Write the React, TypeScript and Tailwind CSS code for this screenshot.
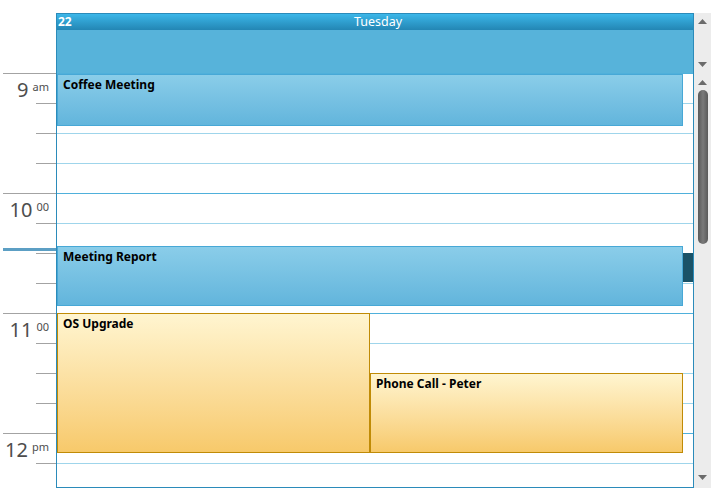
import React from 'react'

const hours = [
  { n: '9', s: 'am' },
  { n: '10', s: '00' },
  { n: '11', s: '00' },
  { n: '12', s: 'pm' },
]

function Arrow({ up }: { up?: boolean }) {
  return (
    <svg width="9" height="5" viewBox="0 0 9 5" className="block">
      {up ? <polygon points="0,5 9,5 4.5,0" fill="#6b6b6b" /> : <polygon points="0,0 9,0 4.5,5" fill="#6b6b6b" />}
    </svg>
  )
}

function CalEvent({
  title,
  kind,
  className,
}: {
  title: string
  kind: 'blue' | 'gold'
  className: string
}) {
  const look =
    kind === 'blue'
      ? 'bg-gradient-to-b from-[#8acde9] to-[#62b5dc] border-[#47a8d6]'
      : 'bg-gradient-to-b from-[#fff5d0] to-[#f7c96a] border-[#c08b06]'
  return (
    <div className={`absolute border px-[5px] pt-[3px] text-[12px] font-bold text-black leading-[14px] ${look} ${className}`}>
      {title}
    </div>
  )
}

export default function App() {
  return (
    <div className="w-[715px] h-[500px] bg-white pt-[13px] font-['Noto_Sans',sans-serif] select-none">
      {/* day header + all day area */}
      <div className="flex h-[60px]">
        <div className="w-[56px] shrink-0" />
        <div className="w-[638px] shrink-0 border-x border-t border-[#2b8bba] flex flex-col">
          <div className="h-[16px] bg-gradient-to-b from-[#3cb7e9] to-[#2386b4] relative flex items-center">
            <span className="absolute left-[1px] top-[1px] text-[12px] font-bold text-white leading-[14px]">22</span>
            <span className="w-full text-center pl-[6px] text-[12.5px] text-white leading-[14px]">Tuesday</span>
          </div>
          <div className="flex-1 bg-[#57b3da]" />
        </div>
        <div className="w-[17px] shrink-0 bg-[#ececec] flex flex-col items-center justify-between pt-[6px] pb-[6px]">
          <Arrow up />
          <Arrow />
        </div>
      </div>

      {/* time area */}
      <div className="flex h-[415px]">
        {/* ruler */}
        <div className="w-[56px] shrink-0 relative overflow-hidden">
          {hours.map((h, i) => (
            <div key={i}>
              <div className="h-[30px] ml-[3px] border-t border-[#a3a3a3] flex justify-end items-start pr-[7px] pt-[5px] text-[#4d4d4d]">
                <span className="text-[20px] leading-[22px]">{h.n}</span>
                <span className="text-[11px] leading-[12px] ml-[4px] mt-[2px]">{h.s}</span>
              </div>
              <div className="h-[30px] ml-[36px] border-t border-[#a3a3a3]" />
              <div className="h-[30px] ml-[36px] border-t border-[#a3a3a3]" />
              <div className="h-[30px] ml-[36px] border-t border-[#a3a3a3]" />
            </div>
          ))}
          <div className="absolute left-[3px] right-0 top-[175px] h-[3px] bg-[#5c9fc4]" />
        </div>

        {/* day column */}
        <div className="w-[638px] shrink-0 border-x border-b border-[#2b8bba] relative overflow-hidden">
          {Array.from({ length: 14 }).map((_, i) => (
            <div
              key={i}
              className={`h-[30px] border-t ${i % 4 === 0 ? 'border-[#4fb0db]' : 'border-[#9fd5eb]'}`}
            />
          ))}
          <CalEvent title="Coffee Meeting" kind="blue" className="left-0 top-[1px] w-[626px] h-[52px]" />
          <CalEvent title="Meeting Report" kind="blue" className="left-0 top-[173px] w-[626px] h-[60px]" />
          <div className="absolute left-[626px] top-[180px] w-[10px] h-[29px] bg-[#1a5267]" />
          <CalEvent title="OS Upgrade" kind="gold" className="left-0 top-[240px] w-[313px] h-[140px]" />
          <CalEvent title="Phone Call - Peter" kind="gold" className="left-[313px] top-[300px] w-[313px] h-[80px]" />
        </div>

        {/* scrollbar */}
        <div className="w-[17px] shrink-0 bg-[#ececec] flex flex-col items-center pt-[7px] pb-[8px]">
          <Arrow up />
          <div className="mt-[5px] w-[10px] h-[154px] rounded-full bg-gradient-to-r from-[#5a5a5a] via-[#7a7a7a] to-[#5a5a5a]" />
          <div className="flex-1" />
          <Arrow />
        </div>
      </div>
    </div>
  )
}
